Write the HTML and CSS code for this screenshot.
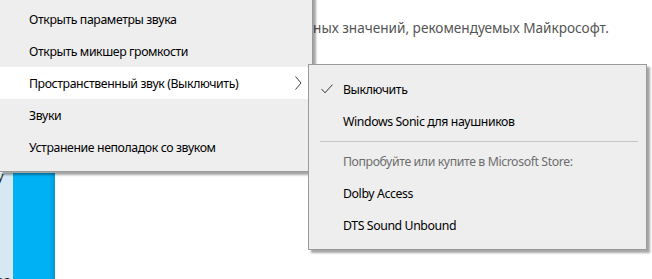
FILE: index.html
```html
<!DOCTYPE html>
<html>
    <head>
        <meta name="viewport" content="width=device-width">
        <title>Звук</title>
        <link rel="stylesheet" href="styles.css">
    </head>
    <body>
        <div class="page">
            <div class="hint"><span>Сбросить громкость и устройства для приложений до стандартных значений, рекомендуемых Майкрософт.</span></div>
            <div class="tiles">
                <div class="tile-side"><span class="top">у</span><span class="bottom">22</span></div>
                <div class="tile-blue"></div>
            </div>
        </div>

        <div class="menu main-menu">
            <div class="item">Открыть параметры звука</div>
            <div class="item">Открыть микшер громкости</div>
            <div class="item active">Пространственный звук (Выключить)
                <svg class="chevron" width="7" height="14" viewBox="0 0 7 14"><path d="M0.5 0.5 L6 7 L0.5 13.5" fill="none" stroke="#444" stroke-width="1"/></svg>
            </div>
            <div class="item">Звуки</div>
            <div class="item">Устранение неполадок со звуком</div>
        </div>

        <div class="menu sub-menu">
            <div class="item">
                <svg class="check" width="12" height="10" viewBox="0 0 12 10"><path d="M0.5 5 L4 8.8 L11.5 0.6" fill="none" stroke="#333" stroke-width="1"/></svg>
                Выключить
            </div>
            <div class="item">Windows Sonic для наушников</div>
            <div class="sep"></div>
            <div class="item disabled">Попробуйте или купите в Microsoft Store:</div>
            <div class="item">Dolby Access</div>
            <div class="item">DTS Sound Unbound</div>
        </div>
    </body>
</html>
```

FILE: styles.css
```css
body{
    margin:0;
    width:652px;
    height:279px;
    overflow:hidden;
    position:relative;
    background:#fff;
    font-family:"Noto Sans","Open Sans",sans-serif;
}
.page{height:279px;display:flex;flex-direction:column;justify-content:space-between}
.hint{
    display:flex;
    justify-content:flex-end;
    padding-right:43px;
    font-size:13.6px;
    color:#555;
    white-space:nowrap;
    margin-top:18px;
}
.tiles{display:flex;height:106px}
.tile-side{width:13px;background:#d6e9f3;position:relative;font-size:13px;color:#222;overflow:hidden}
.tile-side .top{position:absolute;left:-3px;top:-6px}
.tile-side .bottom{position:absolute;left:-4px;bottom:-12px}
.tile-blue{width:42px;background:linear-gradient(90deg,#00b2f4 0,#00b2f4 36px,#0098d8 42px)}

.menu{
    position:absolute;
    background:#eeeeee;
    border:1px solid #9a9a9a;
    box-shadow:3px 3px 2px rgba(0,0,0,.35);
    padding:8px 0;
    font-size:12.3px;
    letter-spacing:-0.4px;
    color:#000;
}
.main-menu{left:-1px;top:-6px;width:312px}
.sub-menu{left:308px;top:64px;width:337px}
.item{height:32px;display:flex;align-items:center;padding-left:29px;position:relative;white-space:nowrap}
.sub-menu .item{padding-left:34px}
.item.active{background:#fff}
.item.disabled{color:#6d6d6d}
.chevron{position:absolute;left:295px;top:9px}
.check{position:absolute;left:12px;top:11px}
.sep{height:1px;background:#c6c6c6;margin:4px 8px 3px 11px}
```
